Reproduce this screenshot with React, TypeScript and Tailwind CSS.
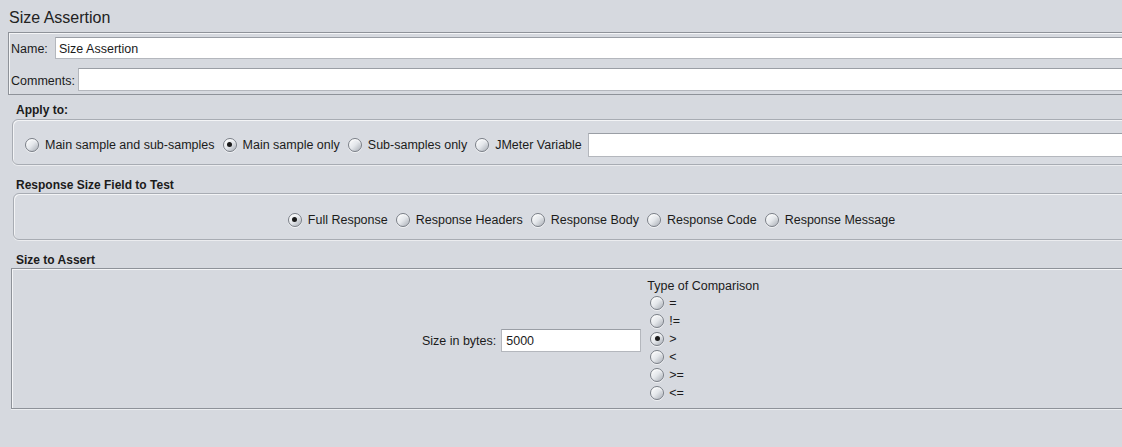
import React from "react";

function Radio({ checked = false }: { checked?: boolean }) {
  return (
    <span className="relative inline-flex w-[14px] h-[14px] shrink-0 items-center justify-center rounded-full border border-[#7a7f87] bg-linear-to-br from-white via-[#e4e7eb] to-[#a9aeb6] shadow-[inset_0_1px_1px_rgba(255,255,255,0.9),0_1px_0_rgba(255,255,255,0.6)]">
      {checked && <span className="w-[5px] h-[5px] rounded-full bg-[#1a1a1a]" />}
    </span>
  );
}

function RadioItem({ label, checked = false }: { label: string; checked?: boolean }) {
  return (
    <span className="inline-flex items-center gap-[6px]">
      <Radio checked={checked} />
      <span className="whitespace-nowrap">{label}</span>
    </span>
  );
}

export default function App() {
  return (
    <div className="w-[1122px] h-[447px] overflow-hidden bg-[#d6d9df] text-[12.5px] leading-[14px] text-[#1b1b1b] font-['Liberation_Sans',Arial,sans-serif]">
      <div className="w-[1170px] pl-[8px] pt-[8px]">
        <div className="h-[20px] text-[16px] leading-[20px] pl-[1px] text-[#222]">Size Assertion</div>

        {/* Name / Comments box */}
        <div className="mt-[4px] h-[63px] border border-[#8e9299] shadow-[inset_1px_1px_0_#f4f5f7] pt-[4px] pl-[2px] flex flex-col gap-[9px]">
          <div className="flex items-center h-[22px]">
            <span className="w-[44px] shrink-0 pt-[2px]">Name:</span>
            <div className="flex-1 h-[22px] bg-white border border-[#b4b7bd] border-t-[#9a9ea5] pl-[3px] pt-[2px] flex items-center">Size Assertion</div>
          </div>
          <div className="flex items-center h-[23px]">
            <span className="w-[67px] shrink-0 pt-[2px]">Comments:</span>
            <div className="flex-1 h-[23px] bg-white border border-[#b4b7bd] border-t-[#9a9ea5]" />
          </div>
        </div>

        {/* Apply to */}
        <div className="mt-[8px] ml-[8px] font-bold text-[12px]">Apply to:</div>
        <div className="mt-[2px] ml-[4px] h-[46px] rounded-[6px] border border-[#a8acb3] bg-[#d8dbe1] shadow-[inset_1px_1px_0_rgba(255,255,255,0.7),0_1px_0_rgba(255,255,255,0.5)] flex items-center pl-[12px] pt-[5px] gap-[8px]">
          <RadioItem label="Main sample and sub-samples" />
          <RadioItem label="Main sample only" checked />
          <RadioItem label="Sub-samples only" />
          <RadioItem label="JMeter Variable" />
          <div className="-ml-[2px] flex-1 h-[24px] bg-white border border-[#b4b7bd] border-t-[#9a9ea5]" />
        </div>

        {/* Response Size Field */}
        <div className="mt-[13px] ml-[8px] font-bold text-[12px]">Response Size Field to Test</div>
        <div className="mt-[1px] ml-[5px] h-[47px] rounded-[6px] border border-[#a8acb3] bg-[#d8dbe1] shadow-[inset_1px_1px_0_rgba(255,255,255,0.7),0_1px_0_rgba(255,255,255,0.5)] flex items-center justify-center pt-[6px] gap-[8px]">
          <RadioItem label="Full Response" checked />
          <RadioItem label="Response Headers" />
          <RadioItem label="Response Body" />
          <RadioItem label="Response Code" />
          <RadioItem label="Response Message" />
        </div>

        {/* Size to Assert */}
        <div className="mt-[13px] ml-[8px] font-bold text-[12px]">Size to Assert</div>
        <div className="mt-[1px] ml-[3px] h-[141px] border border-[#8e9299] shadow-[inset_1px_1px_0_#f4f5f7,0_1px_0_#eceef1] flex items-center justify-center pt-[3px]">
          <div className="flex items-center">
            <span className="mr-[5px] pt-[1px]">Size in bytes:</span>
            <div className="w-[140px] h-[23px] bg-white border border-[#b4b7bd] border-t-[#9a9ea5] pl-[4px] pt-[1px] flex items-center">5000</div>
            <div className="ml-[6px] flex flex-col">
              <span className="h-[15px] leading-[15px]">Type of Comparison</span>
              <div className="flex flex-col pl-[3px]">
                {["=", "!=", ">", "<", ">=", "<="].map((op) => (
                  <span key={op} className="h-[18px] flex items-center gap-[5px]">
                    <Radio checked={op === ">"} />
                    <span>{op}</span>
                  </span>
                ))}
              </div>
            </div>
          </div>
        </div>
      </div>
    </div>
  );
}
